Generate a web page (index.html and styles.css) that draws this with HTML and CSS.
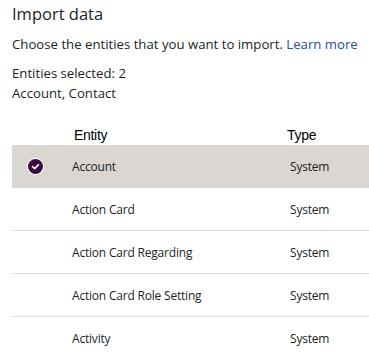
FILE: index.html
```
<!DOCTYPE html>
<html lang="en">
<head>
    <meta charset="UTF-8">
    <title>Import data</title>
    <link rel="stylesheet" href="styles.css">
</head>
<body>
    <div class="panel">
        <h1 class="panel-title">Import data</h1>
        <p class="intro">Choose the entities that you want to import. <a href="#" class="learn-more">Learn more</a></p>

        <div class="selection">
            <p>Entities selected: 2</p>
            <p>Account, Contact</p>
        </div>

        <div class="entity-list">
            <div class="list-header">
                <div class="col-check"></div>
                <div class="col-name">Entity</div>
                <div class="col-type">Type</div>
            </div>

            <div class="list-row selected">
                <div class="col-check">
                    <span class="check-mark">
                        <svg width="15" height="15" viewBox="0 0 15 15">
                            <circle cx="7.5" cy="7.5" r="7.5" fill="#3b0a3f"/>
                            <path d="M4.6 7.7 L6.7 9.6 L10.4 5.6" fill="none" stroke="#fff" stroke-width="1.6" stroke-linecap="round" stroke-linejoin="round"/>
                        </svg>
                    </span>
                </div>
                <div class="col-name">Account</div>
                <div class="col-type">System</div>
            </div>
            <div class="list-row">
                <div class="col-check"></div>
                <div class="col-name">Action Card</div>
                <div class="col-type">System</div>
            </div>
            <div class="list-row">
                <div class="col-check"></div>
                <div class="col-name">Action Card Regarding</div>
                <div class="col-type">System</div>
            </div>
            <div class="list-row">
                <div class="col-check"></div>
                <div class="col-name">Action Card Role Setting</div>
                <div class="col-type">System</div>
            </div>
            <div class="list-row">
                <div class="col-check"></div>
                <div class="col-name">Activity</div>
                <div class="col-type">System</div>
            </div>
        </div>
    </div>
</body>
</html>
```

FILE: styles.css
```
* {
    margin: 0;
    padding: 0;
    box-sizing: border-box;
}

body {
    font-family: 'Open Sans', sans-serif;
    background: #fff;
    color: #201f1e;
    overflow: hidden;
}

.panel {
    padding: 2px 0 0 12px;
}

.panel-title {
    font-size: 16.5px;
    font-weight: normal;
    line-height: 24px;
    color: #201f1e;
}

.intro {
    font-size: 13.2px;
    line-height: 20px;
    margin-top: 8px;
}

.learn-more {
    color: #1d4f9c;
    text-decoration: none;
}

.selection {
    margin-top: 9px;
}

.selection p {
    font-size: 13.2px;
    line-height: 20px;
}

.entity-list {
    margin-top: 15px;
}

.list-header,
.list-row {
    display: flex;
    align-items: center;
}

.list-header {
    height: 27px;
    padding-top: 6px;
    font-family: 'Liberation Sans', Arial, sans-serif;
    font-size: 14px;
    letter-spacing: -0.3px;
    color: #000;
}

.list-header .col-name {
    padding-left: 2px;
}

.list-header .col-type {
    padding-left: 0;
}

.list-row {
    height: 43px;
    font-size: 12px;
    letter-spacing: -0.2px;
    border-bottom: 1px solid #e1dfdd;
}

.list-row.selected {
    background: #dad6d2;
    border-bottom: none;
}

.list-row:last-child {
    border-bottom: none;
}

.col-check {
    width: 60px;
    display: flex;
    justify-content: flex-start;
    padding-left: 15px;
}

.col-name {
    width: 215px;
}

.col-type {
    padding-left: 3px;
}

.check-mark {
    display: flex;
    width: 17px;
    height: 17px;
    border-radius: 50%;
    background: #fff;
    align-items: center;
    justify-content: center;
}
```
